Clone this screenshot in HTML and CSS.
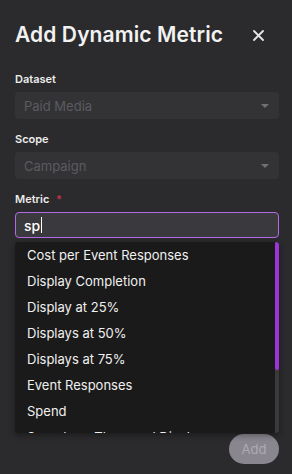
FILE: index.html
```html
<!DOCTYPE html>
<html lang="en">
<head>
  <meta charset="UTF-8">
  <meta name="viewport" content="width=device-width, initial-scale=1">
  <title>Add Dynamic Metric</title>
  <link rel="stylesheet" href="styles.css">
</head>
<body>
  <div class="dialog">
    <div class="dialog-header">
      <h1>Add Dynamic Metric</h1>
      <button class="close" aria-label="Close">
        <svg width="11" height="11" viewBox="0 0 11 11"><path d="M1 1L10 10M10 1L1 10" stroke="#e6e6e6" stroke-width="1.8" stroke-linecap="round"/></svg>
      </button>
    </div>

    <div class="field">
      <label>Dataset</label>
      <div class="select disabled">
        <span>Paid Media</span>
        <span class="caret"></span>
      </div>
    </div>

    <div class="field">
      <label>Scope</label>
      <div class="select disabled">
        <span>Campaign</span>
        <span class="caret"></span>
      </div>
    </div>

    <div class="field metric">
      <label>Metric <span class="req">*</span></label>
      <div class="input focused">sp<span class="cursor"></span></div>
      <div class="menu">
        <ul>
          <li>Cost per Event Responses</li>
          <li>Display Completion</li>
          <li>Display at 25%</li>
          <li>Displays at 50%</li>
          <li>Displays at 75%</li>
          <li>Event Responses</li>
          <li>Spend</li>
          <li>Spend per Thousand Displays</li>
        </ul>
        <div class="scrollbar"><div class="thumb"></div></div>
      </div>
    </div>

    <div class="actions">
      <button class="add" disabled>Add</button>
    </div>
  </div>
</body>
</html>
```

FILE: styles.css
```css
body, html {
  margin: 0;
  padding: 0;
  background-color: #2b2b2d;
  font-family: "Inter", "Noto Sans", sans-serif;
  color: #f2f2f2;
}
.dialog {
  padding: 22px 13px 10px 15px;
}
.dialog-header {
  display: flex;
  align-items: center;
  justify-content: space-between;
  margin-bottom: 24px;
}
.dialog-header h1 {
  margin: 0;
  font-size: 21px;
  font-weight: 600;
  line-height: 26px;
  letter-spacing: 0.1px;
}
.close {
  background: none;
  border: none;
  padding: 0;
  margin-right: 15px;
  width: 11px;
  height: 11px;
  display: flex;
}
.field {
  margin-bottom: 13px;
}
.field label {
  display: block;
  font-size: 11px;
  font-weight: 600;
  line-height: 14px;
  margin-bottom: 6px;
  color: #ececec;
}
.req {
  color: #c4314b;
  margin-left: 4px;
}
.select {
  height: 27px;
  border-radius: 4px;
  background-color: #333336;
  display: flex;
  align-items: center;
  justify-content: space-between;
  padding: 0 10px 0 9px;
  font-size: 13px;
}
.select.disabled {
  color: #5b5b5f;
}
.caret {
  width: 0;
  height: 0;
  border-left: 4px solid transparent;
  border-right: 4px solid transparent;
  border-top: 4px solid #707074;
}
.metric {
  position: relative;
}
.input {
  height: 24px;
  border: 1px solid #b36ae6;
  border-radius: 4px;
  background-color: #3a393d;
  display: flex;
  align-items: center;
  padding: 0 8px;
  font-size: 14px;
  font-weight: 500;
  color: #ffffff;
}
.cursor {
  display: inline-block;
  width: 1px;
  height: 16px;
  background-color: #ffffff;
  margin-left: 1px;
}
.menu {
  position: absolute;
  left: 0;
  right: 0;
  top: 50px;
  height: 191px;
  overflow: hidden;
  background-color: #1a1a1a;
  border-radius: 3px;
  box-shadow: 0 2px 6px rgba(0, 0, 0, 0.4);
}
.menu ul {
  list-style: none;
  margin: 0;
  padding: 0;
}
.menu li {
  height: 26px;
  line-height: 26px;
  padding-left: 12px;
  font-size: 13px;
  color: #f0f0f0;
  white-space: nowrap;
}
.scrollbar {
  position: absolute;
  top: 0;
  right: 0;
  width: 4px;
  height: 100%;
  background-color: #3a3a3d;
}
.thumb {
  height: 128px;
  background-color: #9b35d8;
  border-radius: 2px;
}
.actions {
  display: flex;
  justify-content: flex-end;
  margin-top: 196px;
}
.add {
  width: 50px;
  height: 30px;
  border: none;
  border-radius: 15px;
  background-color: #8a8690;
  color: #aeaab3;
  font-family: inherit;
  font-size: 13px;
}
```
